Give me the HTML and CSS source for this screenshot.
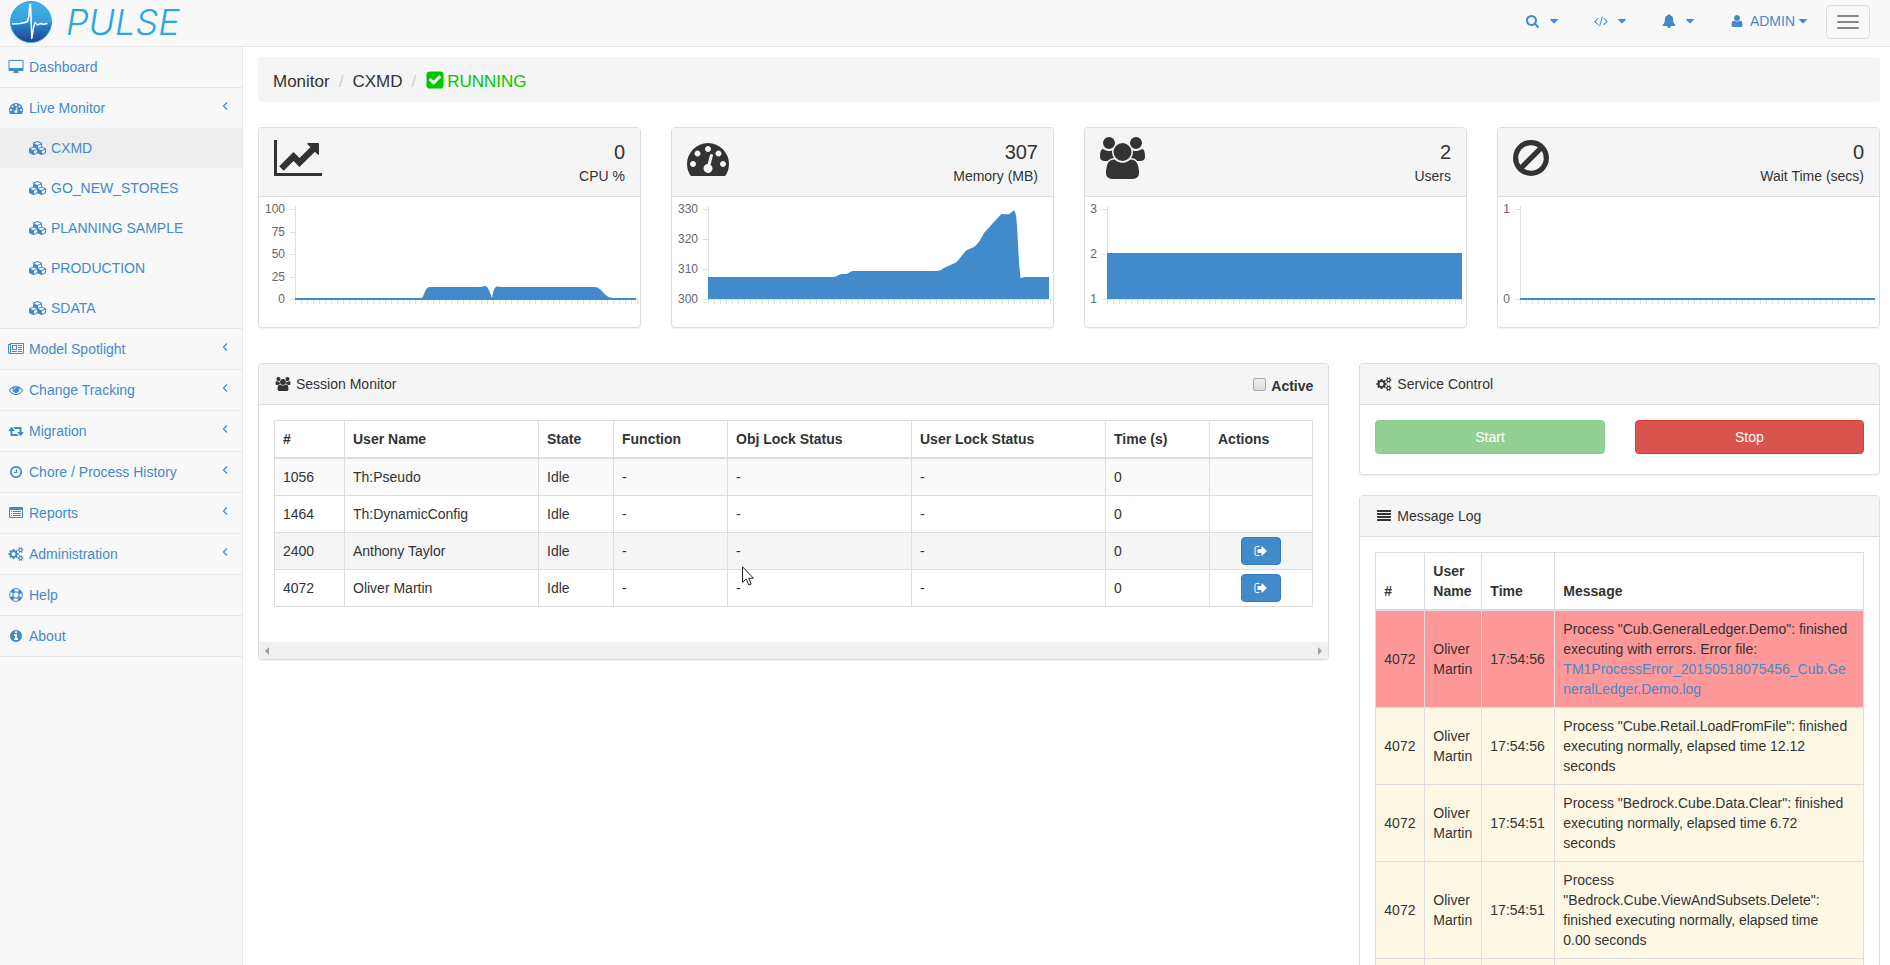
FILE: index.html
```html
<!DOCTYPE html>
<html lang="en">
<head>
    <meta charset="UTF-8">
    <meta name="viewport" content="width=device-width, initial-scale=1.0">
    <title>Pulse - CXMD</title>
    <link rel="stylesheet" href="styles.css">
</head>
<body>
    <!-- Icon sprite -->
    <svg class="sprite" aria-hidden="true">
        <symbol id="i-search" viewBox="64 0 1792 1792"><path d="M1216 832q0-185-131.5-316.5t-316.5-131.5-316.5 131.5-131.5 316.5 131.5 316.5 316.5 131.5 316.5-131.5 131.5-316.5zm512 832q0 52-38 90t-90 38q-54 0-90-38l-343-342q-179 124-399 124-143 0-273.5-55.5t-225-150-150-225-55.5-273.5 55.5-273.5 150-225 225-150 273.5-55.5 273.5 55.5 225 150 150 225 55.5 273.5q0 220-124 399l343 343q37 37 37 90z"/></symbol>
        <symbol id="i-code" viewBox="0 0 1920 1792"><path d="M617 1399l-50 50q-10 10-23 10t-23-10l-466-466q-10-10-10-23t10-23l466-466q10-10 23-10t23 10l50 50q10 10 10 23t-10 23l-393 393 393 393q10 10 10 23t-10 23zm591-1067l-373 1291q-4 13-15.5 19.5t-23.5 2.5l-62-17q-13-4-19.5-15.5t-2.5-24.5l373-1291q4-13 15.5-19.5t23.5-2.5l62 17q13 4 19.5 15.5t2.5 24.5zm657 651l-466 466q-10 10-23 10t-23-10l-50-50q-10-10-10-23t10-23l393-393-393-393q-10-10-10-23t10-23l50-50q10-10 23-10t23 10l466 466q10 10 10 23t-10 23z"/></symbol>
        <symbol id="i-bell" viewBox="0 0 1792 1792"><path d="M912 1696q0-16-16-16-59 0-101.5-42.5t-42.5-101.5q0-16-16-16t-16 16q0 73 51.5 124.5t124.5 51.5q16 0 16-16zm816-288q0 52-38 90t-90 38h-448q0 106-75 181t-181 75-181-75-75-181h-448q-52 0-90-38t-38-90q50-42 91-88t85-119.5 74.5-158.5 50-206 19.5-260q0-152 117-282.5t307-158.5q-8-19-8-39 0-40 28-68t68-28 68 28 28 68q0 20-8 39 190 28 307 158.5t117 282.5q0 139 19.5 260t50 206 74.5 158.5 85 119.5 91 88z"/></symbol>
        <symbol id="i-user" viewBox="0 0 1792 1792"><path d="M1600 1405q0 120-73 189.5t-194 69.5h-874q-121 0-194-69.5t-73-189.5q0-53 3.5-103.5t14-109 26.5-108.5 43-97.5 62-81 85.5-53.5 111.5-20q9 0 42 21.5t74.5 48 108 48 133.5 21.5 133.5-21.5 108-48 74.5-48 42-21.5q61 0 111.5 20t85.5 53.5 62 81 43 97.5 26.5 108.5 14 109 3.5 103.5zm-320-893q0 159-112.5 271.5t-271.5 112.5-271.5-112.5-112.5-271.5 112.5-271.5 271.5-112.5 271.5 112.5 112.5 271.5z"/></symbol>
        <symbol id="i-caret" viewBox="384 0 1024 1792"><path d="M1408 704q0 26-19 45l-448 448q-19 19-45 19t-45-19l-448-448q-19-19-19-45t19-45 45-19h896q26 0 45 19t19 45z"/></symbol>
        <symbol id="i-desktop" viewBox="-64 0 1920 1792"><path d="M1728 992v-832q0-13-9.5-22.5t-22.5-9.5h-1600q-13 0-22.5 9.5t-9.5 22.5v832q0 13 9.5 22.5t22.5 9.5h1600q13 0 22.5-9.5t9.5-22.5zm128-832v1088q0 66-47 113t-113 47h-544q0 37 16 77.5t32 71 16 43.5q0 26-19 45t-45 19h-512q-26 0-45-19t-19-45q0-14 16-44t32-70 16-78h-544q-66 0-113-47t-47-113v-1088q0-66 47-113t113-47h1600q66 0 113 47t47 113z"/></symbol>
        <symbol id="i-dashboard" viewBox="0 0 1792 1792"><path d="M384 1152q0-53-37.5-90.5t-90.5-37.5-90.5 37.5-37.5 90.5 37.5 90.5 90.5 37.5 90.5-37.5 37.5-90.5zm192-448q0-53-37.5-90.5t-90.5-37.5-90.5 37.5-37.5 90.5 37.5 90.5 90.5 37.5 90.5-37.5 37.5-90.5zm428 481l101-382q6-26-7.5-48.5t-38.5-29.5-48 6.5-30 39.5l-101 382q-60 5-107 43.5t-63 98.5q-20 77 20 146t117 89 146-20 89-117q16-60-6-117t-72-91zm660-33q0-53-37.5-90.5t-90.5-37.5-90.5 37.5-37.5 90.5 37.5 90.5 90.5 37.5 90.5-37.5 37.5-90.5zm-640-640q0-53-37.5-90.5t-90.5-37.5-90.5 37.5-37.5 90.5 37.5 90.5 90.5 37.5 90.5-37.5 37.5-90.5zm448 192q0-53-37.5-90.5t-90.5-37.5-90.5 37.5-37.5 90.5 37.5 90.5 90.5 37.5 90.5-37.5 37.5-90.5zm320 448q0 261-141 483-19 29-54 29h-1402q-35 0-54-29-141-221-141-483 0-182 71-348t191-286 286-191 348-71 348 71 286 191 191 286 71 348z"/></symbol>
        <symbol id="i-cubes" viewBox="0 0 2304 1792"><path d="M640 1632l384-192v-314l-384 164v342zm-64-454l404-173-404-173-404 173zm1088 454l384-192v-314l-384 164v342zm-64-454l404-173-404-173-404 173zm-448-293l384-165v-266l-384 164v267zm-64-379l441-189-441-189-441 189zm1088 518v416q0 36-19 67t-52 47l-448 224q-25 14-57 14t-57-14l-448-224q-5-2-7-4-2 2-7 4l-448 224q-25 14-57 14t-57-14l-448-224q-33-16-52-47t-19-67v-416q0-38 21.5-70t56.5-48l434-186v-400q0-38 21.5-70t56.5-48l448-192q23-10 50-10t50 10l448 192q35 16 56.5 48t21.5 70v400l434 186q36 16 57 48t21 70z"/></symbol>
        <symbol id="i-news" viewBox="0 0 2048 1792"><path d="M1024 512h-384v384h384v-384zm128 640v128h-640v-128h640zm0-768v640h-640v-640h640zm640 768v128h-512v-128h512zm0-256v128h-512v-128h512zm0-256v128h-512v-128h512zm0-256v128h-512v-128h512zm-1536 960v-960h-128v960q0 26 19 45t45 19 45-19 19-45zm1664 0v-1088h-1536v1088q0 33-11 64h1483q26 0 45-19t19-45zm128-1216v1216q0 80-56 136t-136 56h-1664q-80 0-136-56t-56-136v-1088h256v-128h1792z"/></symbol>
        <symbol id="i-eye" viewBox="0 0 1792 1792"><path d="M1664 960q-152-236-381-353 61 104 61 225 0 185-131.5 316.5t-316.5 131.5-316.5-131.5-131.5-316.5q0-121 61-225-229 117-381 353 133 205 333.5 326.5t434.5 121.5 434.5-121.5 333.5-326.5zm-720-384q0-20-14-34t-34-14q-125 0-214.5 89.5t-89.5 214.5q0 20 14 34t34 14 34-14 14-34q0-86 61-147t147-61q20 0 34-14t14-34zm848 384q0 34-20 69-140 230-376.5 368.5t-499.5 138.5-499.5-139-376.5-368q-20-35-20-69t20-69q140-229 376.5-368t499.5-139 499.5 139 376.5 368q20 35 20 69z"/></symbol>
        <symbol id="i-retweet" viewBox="64 0 1920 1792"><path d="M1344 1504q0 13-9.5 22.5t-22.5 9.5h-960q-8 0-13.5-2t-9-7-5.5-8-3-11.5-1-11.5v-600h-192q-26 0-45-19t-19-45q0-24 15-41l320-384q19-22 49-22t49 22l320 384q15 17 15 41 0 26-19 45t-45 19h-192v384h576q16 0 25 11l160 192q7 10 7 21zm640-416q0 24-15 41l-320 384q-20 23-49 23t-49-23l-320-384q-15-17-15-41 0-26 19-45t45-19h192v-384h-576q-16 0-25-12l-160-192q-7-9-7-20 0-13 9.5-22.5t22.5-9.5h960q8 0 13.5 2t9 7 5.5 8 3 11.5 1 11.5v600h192q26 0 45 19t19 45z"/></symbol>
        <symbol id="i-clock" viewBox="0 0 1792 1792"><path d="M1024 544v448q0 14-9 23t-23 9h-320q-14 0-23-9t-9-23v-64q0-14 9-23t23-9h224v-352q0-14 9-23t23-9h64q14 0 23 9t9 23zm416 352q0-148-73-273t-198-198-273-73-273 73-198 198-73 273 73 273 198 198 273 73 273-73 198-198 73-273zm224 0q0 209-103 385.5t-279.5 279.5-385.5 103-385.5-103-279.5-279.5-103-385.5 103-385.5 279.5-279.5 385.5-103 385.5 103 279.5 279.5 103 385.5z"/></symbol>
        <symbol id="i-list" viewBox="0 0 1792 1792"><path d="M256 640h128v128h-128zM256 896h128v128h-128zM256 1152h128v128h-128zM512 640h1024v128h-1024zM512 896h1024v128h-1024zM512 1152h1024v128h-1024z"/><path d="M1664 1376v-832q0-13-9.5-22.5t-22.5-9.5h-1472q-13 0-22.5 9.5t-9.5 22.5v832q0 13 9.5 22.5t22.5 9.5h1472q13 0 22.5-9.5t9.5-22.5zm128-1088v1088q0 66-47 113t-113 47h-1472q-66 0-113-47t-47-113v-1088q0-66 47-113t113-47h1472q66 0 113 47t47 113z"/></symbol>
        <symbol id="i-cogs" viewBox="0 0 1920 1792"><path d="M896 896q0-106-75-181t-181-75-181 75-75 181 75 181 181 75 181-75 75-181zm768 512q0-52-38-90t-90-38-90 38-38 90q0 53 37.5 90.5t90.5 37.5 90.5-37.5 37.5-90.5zm0-1024q0-52-38-90t-90-38-90 38-38 90q0 53 37.5 90.5t90.5 37.5 90.5-37.5 37.5-90.5zm-384 421v185q0 10-7 19.5t-16 10.5l-155 24q-11 35-32 76 34 48 90 115 7 11 7 20 0 12-7 19-23 30-82.5 89.5t-78.5 59.5q-11 0-21-7l-115-90q-37 19-77 31-11 108-23 155-7 24-30 24h-186q-11 0-20-7.5t-10-17.5l-23-153q-34-10-75-31l-118 89q-7 7-20 7-11 0-21-8-144-133-144-160 0-9 7-19 10-14 41-53t47-61q-23-44-35-82l-152-24q-10-1-17-9.5t-7-19.5v-185q0-10 7-19.5t16-10.5l155-24q11-35 32-76-34-48-90-115-7-11-7-20 0-12 7-20 22-30 82-89t79-59q11 0 21 7l115 90q34-18 77-32 11-108 23-154 7-24 30-24h186q11 0 20 7.5t10 17.5l23 153q34 10 75 31l118-89q8-7 20-7 11 0 21 8 144 133 144 160 0 8-7 19-12 16-42 54t-45 60q23 48 34 82l152 23q10 2 17 10.5t7 19.5zm640 533v140q0 16-149 31-12 27-30 52 51 113 51 138 0 4-4 7-122 71-124 71-8 0-46-47t-52-68q-20 2-30 2t-30-2q-14 21-52 68t-46 47q-2 0-124-71-4-3-4-7 0-25 51-138-18-25-30-52-149-15-149-31v-140q0-16 149-31 13-29 30-52-51-113-51-138 0-4 4-7 4-2 35-20t59-34 30-16q8 0 46 46.5t52 67.5q20-2 30-2t30 2q51-71 92-112l6-2q4 0 124 70 4 3 4 7 0 25-51 138 17 23 30 52 149 15 149 31zm0-1024v140q0 16-149 31-12 27-30 52 51 113 51 138 0 4-4 7-122 71-124 71-8 0-46-47t-52-68q-20 2-30 2t-30-2q-14 21-52 68t-46 47q-2 0-124-71-4-3-4-7 0-25 51-138-18-25-30-52-149-15-149-31v-140q0-16 149-31 13-29 30-52-51-113-51-138 0-4 4-7 4-2 35-20t59-34 30-16q8 0 46 46.5t52 67.5q20-2 30-2t30 2q51-71 92-112l6-2q4 0 124 70 4 3 4 7 0 25-51 138 17 23 30 52 149 15 149 31z"/></symbol>
        <symbol id="i-ring" viewBox="0 0 14 14"><g fill="none" stroke="currentColor"><circle cx="7" cy="7" r="6.4"/><circle cx="7" cy="7" r="3.2"/><circle cx="7" cy="7" r="4.8" stroke-width="3.4" stroke-dasharray="3.4 4.14" stroke-dashoffset="-2.07"/></g></symbol>
        <symbol id="i-info" viewBox="0 0 1792 1792"><path d="M1152 1376v-160q0-14-9-23t-23-9h-96v-512q0-14-9-23t-23-9h-320q-14 0-23 9t-9 23v160q0 14 9 23t23 9h96v320h-96q-14 0-23 9t-9 23v160q0 14 9 23t23 9h448q14 0 23-9t9-23zm-128-896v-160q0-14-9-23t-23-9h-192q-14 0-23 9t-9 23v160q0 14 9 23t23 9h192q14 0 23-9t9-23zm640 416q0 209-103 385.5t-279.5 279.5-385.5 103-385.5-103-279.5-279.5-103-385.5 103-385.5 279.5-279.5 385.5-103 385.5 103 279.5 279.5 103 385.5z"/></symbol>
        <symbol id="i-angle" viewBox="0 0 6 8"><path d="M5 .5L1.5 4L5 7.5" fill="none" stroke="currentColor" stroke-width="1.2"/></symbol>
        <symbol id="i-check" viewBox="0 0 1792 1792"><path d="M813 1299l614-614q19-19 19-45t-19-45l-102-102q-19-19-45-19t-45 19l-467 467-211-211q-19-19-45-19t-45 19l-102 102q-19 19-19 45t19 45l358 358q19 19 45 19t45-19zm851-883v960q0 119-84.5 203.5t-203.5 84.5h-960q-119 0-203.5-84.5t-84.5-203.5v-960q0-119 84.5-203.5t203.5-84.5h960q119 0 203.5 84.5t84.5 203.5z"/></symbol>
        <symbol id="i-chart" viewBox="0 0 2048 1792"><path d="M2048 1536v128h-2048v-1536h128v1408h1920zm-128-1248v435q0 21-19.5 29.5t-35.5-7.5l-121-121-633 633q-10 10-23 10t-23-10l-233-233-416 416-192-192 585-585q10-10 23-10t23 10l233 233 464-464-121-121q-16-16-7.5-35.5t29.5-19.5h435q14 0 23 9t9 23z"/></symbol>
        <symbol id="i-users" viewBox="64 0 1920 1792"><path d="M657 896q-162 5-265 128h-134q-82 0-138-40.5t-56-118.5q0-353 124-353 6 0 43.5 21t97.5 42.5 119 21.5q67 0 133-23-5 37-5 66 0 159 81 257zm1071 637q0 120-73 189.5t-194 69.5h-874q-121 0-194-69.5t-73-189.5q0-53 3.5-103.5t14-109 26.5-108.5 43-97.5 62-81 85.5-53.5 111.5-20q10 0 43 21.5t73 48 107 48 135 21.5 135-21.5 107-48 73-48 43-21.5q61 0 111.5 20t85.5 53.5 62 81 43 97.5 26.5 108.5 14 109 3.5 103.5zm-1024-1277q0 106-75 181t-181 75-181-75-75-181 75-181 181-75 181 75 75 181zm704 384q0 159-112.5 271.5t-271.5 112.5-271.5-112.5-112.5-271.5 112.5-271.5 271.5-112.5 271.5 112.5 112.5 271.5zm576 225q0 78-56 118.5t-138 40.5h-134q-103-123-265-128 81-117 81-257 0-29-5-66 66 23 133 23 59 0 119-21.5t97.5-42.5 43.5-21q124 0 124 353zm-128-609q0 106-75 181t-181 75-181-75-75-181 75-181 181-75 181 75 75 181z"/></symbol>
        <symbol id="i-ban" viewBox="128 0 1792 1792"><path d="M1440 893q0-161-87-295l-754 753q137 89 297 89 111 0 211.5-43.5t173.5-116.5 116-174.5 43-212.5zm-999 299l755-754q-135-91-300-91-148 0-273 73t-198 199-73 274q0 162 89 299zm1223-299q0 157-61 300t-163.5 246-245 164-298.5 61-298.5-61-245-164-163.5-246-61-300 61-299.5 163.5-245.5 245-164 298.5-61 298.5 61 245 164 163.5 245.5 61 299.5z"/></symbol>
        <symbol id="i-bars" viewBox="0 0 1792 1792"><rect y="128" width="1792" height="256" rx="64"/><rect y="512" width="1792" height="256" rx="64"/><rect y="896" width="1792" height="256" rx="64"/><rect y="1280" width="1792" height="256" rx="64"/></symbol>
        <symbol id="i-signout" viewBox="0 0 1792 1792"><path d="M704 1440q0 4 1 20t.5 26.5-3 23.5-10 19.5-20.5 6.5h-320q-119 0-203.5-84.5t-84.5-203.5v-704q0-119 84.5-203.5t203.5-84.5h320q13 0 22.5 9.5t9.5 22.5q0 4 1 20t.5 26.5-3 23.5-10 19.5-20.5 6.5h-320q-66 0-113 47t-47 113v704q0 66 47 113t113 47h312l11.5 1 11.5 3 8 5.5 7 9 2 13.5zm928-544q0 26-19 45l-544 544q-19 19-45 19t-45-19-19-45v-288h-448q-26 0-45-19t-19-45v-384q0-26 19-45t45-19h448v-288q0-26 19-45t45-19 45 19l544 544q19 19 19 45z"/></symbol>
    </svg>

    <!-- Top navbar -->
    <header class="navbar">
        <a class="brand" href="#">
            <svg class="brand-logo" viewBox="0 0 42 42" aria-hidden="true">
                <defs>
                    <linearGradient id="logoFill" x1="0" y1="0" x2="0" y2="1">
                        <stop offset="0" stop-color="#3fb4e6"/>
                        <stop offset="0.5" stop-color="#3a9fdc"/>
                        <stop offset="0.55" stop-color="#2384c8"/>
                        <stop offset="1" stop-color="#243f94"/>
                    </linearGradient>
                </defs>
                <circle cx="21" cy="21" r="20.5" fill="url(#logoFill)" stroke="#2fa3da"/>
                <path d="M2 23l8-.5 5-1 2.500-1 1.300-5 1-12 .8 0 1.200 34 2-12 1.200-4 2.500 2.500 3-1.500 3 .8 4-.8" fill="none" stroke="#fff" stroke-width="1.5" stroke-linejoin="round"/>
            </svg>
            <span class="brand-name">PULSE</span>
        </a>
        <nav class="nav-links">
            <a class="nav-link" href="#" aria-label="Search"><svg class="icon"><use href="#i-search"/></svg><svg class="caret caret-far"><use href="#i-caret"/></svg></a>
            <a class="nav-link" href="#" aria-label="Code"><svg class="icon"><use href="#i-code"/></svg><svg class="caret caret-far"><use href="#i-caret"/></svg></a>
            <a class="nav-link" href="#" aria-label="Alerts"><svg class="icon"><use href="#i-bell"/></svg><svg class="caret caret-far"><use href="#i-caret"/></svg></a>
            <a class="nav-link" href="#"><svg class="icon"><use href="#i-user"/></svg><span class="nav-user">ADMIN</span><svg class="caret"><use href="#i-caret"/></svg></a>
        </nav>
        <button class="toggle" type="button" aria-label="Toggle menu">
            <span class="toggle-bar"></span>
            <span class="toggle-bar"></span>
            <span class="toggle-bar"></span>
        </button>
    </header>

    <div class="layout">
        <!-- Sidebar -->
        <nav class="sidebar">
            <ul class="menu">
                <li class="menu-item"><a class="menu-link" href="#"><svg class="menu-icon"><use href="#i-desktop"/></svg>Dashboard</a></li>
                <li class="menu-item">
                    <a class="menu-link" href="#"><svg class="menu-icon"><use href="#i-dashboard"/></svg>Live Monitor<svg class="angle"><use href="#i-angle"/></svg></a>
                    <ul class="submenu">
                        <li><a class="menu-link submenu-link active" href="#"><svg class="menu-icon"><use href="#i-cubes"/></svg>CXMD</a></li>
                        <li><a class="menu-link submenu-link" href="#"><svg class="menu-icon"><use href="#i-cubes"/></svg>GO_NEW_STORES</a></li>
                        <li><a class="menu-link submenu-link" href="#"><svg class="menu-icon"><use href="#i-cubes"/></svg>PLANNING SAMPLE</a></li>
                        <li><a class="menu-link submenu-link" href="#"><svg class="menu-icon"><use href="#i-cubes"/></svg>PRODUCTION</a></li>
                        <li><a class="menu-link submenu-link" href="#"><svg class="menu-icon"><use href="#i-cubes"/></svg>SDATA</a></li>
                    </ul>
                </li>
                <li class="menu-item"><a class="menu-link" href="#"><svg class="menu-icon"><use href="#i-news"/></svg>Model Spotlight<svg class="angle"><use href="#i-angle"/></svg></a></li>
                <li class="menu-item"><a class="menu-link" href="#"><svg class="menu-icon"><use href="#i-eye"/></svg>Change Tracking<svg class="angle"><use href="#i-angle"/></svg></a></li>
                <li class="menu-item"><a class="menu-link" href="#"><svg class="menu-icon"><use href="#i-retweet"/></svg>Migration<svg class="angle"><use href="#i-angle"/></svg></a></li>
                <li class="menu-item"><a class="menu-link" href="#"><svg class="menu-icon"><use href="#i-clock"/></svg>Chore / Process History<svg class="angle"><use href="#i-angle"/></svg></a></li>
                <li class="menu-item"><a class="menu-link" href="#"><svg class="menu-icon"><use href="#i-list"/></svg>Reports<svg class="angle"><use href="#i-angle"/></svg></a></li>
                <li class="menu-item"><a class="menu-link" href="#"><svg class="menu-icon"><use href="#i-cogs"/></svg>Administration<svg class="angle"><use href="#i-angle"/></svg></a></li>
                <li class="menu-item"><a class="menu-link" href="#"><svg class="menu-icon"><use href="#i-ring"/></svg>Help</a></li>
                <li class="menu-item"><a class="menu-link" href="#"><svg class="menu-icon"><use href="#i-info"/></svg>About</a></li>
            </ul>
        </nav>

        <main class="content">
            <div class="breadcrumb">
                <span>Monitor</span>
                <span class="divider">/</span>
                <span>CXMD</span>
                <span class="divider">/</span>
                <span class="status"><svg class="status-icon"><use href="#i-check"/></svg>RUNNING</span>
            </div>

            <!-- Metric cards -->
            <section class="cards">
                <div class="panel">
                    <div class="card-head">
                        <svg class="card-icon card-icon-wide"><use href="#i-chart"/></svg>
                        <div class="card-info">
                            <div class="card-value">0</div>
                            <div class="card-label">CPU %</div>
                        </div>
                    </div>
                    <svg class="chart" viewBox="0 0 381 130">
                        <path class="axis" d="M36.5 9v94M31 12.5h6M31 35.5h6M31 57.5h6M31 80.5h6M31 102.5h349"/>
                        <path class="ticks" d="M36 105h343"/>
                        <path class="area" d="M36 101h127C166 97 166 90 171 90H221C224 90 226 88 228 90C230 92 232 98 233 101C234 96 235 90 238 89.5L244 90H336C343 90 345 101 354 101H377V103H36Z"/>
                        <g class="tick-label"><text x="26" y="16">100</text><text x="26" y="39">75</text><text x="26" y="61">50</text><text x="26" y="84">25</text><text x="26" y="106">0</text></g>
                    </svg>
                </div>
                <div class="panel">
                    <div class="card-head">
                        <svg class="card-icon"><use href="#i-dashboard"/></svg>
                        <div class="card-info">
                            <div class="card-value">307</div>
                            <div class="card-label">Memory (MB)</div>
                        </div>
                    </div>
                    <svg class="chart" viewBox="0 0 381 130">
                        <path class="axis" d="M36.5 9v94M31 12.5h6M31 42.5h6M31 72.5h6M31 102.5h349"/>
                        <path class="ticks" d="M36 105h343"/>
                        <path class="area" d="M36 80H161C165 80 167 77 170 77H174C177 77 178 74 181 74H265C269 74 271 71 274 70L284 65.5C288 62 291 56 295 53L302 50C306 47 309 42 312 36L321 26L329 17.5C331 16 335 18 337 17L342 13.5C344 14 345 25 345.500 38L347 65L348.500 81L353 80H377V102H36Z"/>
                        <g class="tick-label"><text x="26" y="16">330</text><text x="26" y="46">320</text><text x="26" y="76">310</text><text x="26" y="106">300</text></g>
                    </svg>
                </div>
                <div class="panel">
                    <div class="card-head">
                        <svg class="card-icon card-icon-users"><use href="#i-users"/></svg>
                        <div class="card-info">
                            <div class="card-value">2</div>
                            <div class="card-label">Users</div>
                        </div>
                    </div>
                    <svg class="chart" viewBox="0 0 381 130">
                        <path class="axis" d="M22.5 9v94M17 12.5h6M17 57.5h6M17 102.5h363"/>
                        <path class="ticks" d="M22 105h356"/>
                        <path class="area" d="M22 56H377V102H22Z"/>
                        <g class="tick-label"><text x="12" y="16">3</text><text x="12" y="61">2</text><text x="12" y="106">1</text></g>
                    </svg>
                </div>
                <div class="panel">
                    <div class="card-head">
                        <svg class="card-icon"><use href="#i-ban"/></svg>
                        <div class="card-info">
                            <div class="card-value">0</div>
                            <div class="card-label">Wait Time (secs)</div>
                        </div>
                    </div>
                    <svg class="chart" viewBox="0 0 381 130">
                        <path class="axis" d="M22.5 9v94M17 12.5h6M17 102.5h363"/>
                        <path class="ticks" d="M22 105h356"/>
                        <path class="area" d="M22 101H377V103H22Z"/>
                        <g class="tick-label"><text x="12" y="16">1</text><text x="12" y="106">0</text></g>
                    </svg>
                </div>
            </section>

            <section class="columns">
                <!-- Session Monitor -->
                <div class="panel session">
                    <div class="panel-head">
                        <svg class="head-icon"><use href="#i-users"/></svg>
                        <span>Session Monitor</span>
                        <label class="active-filter" for="active"><input class="tick-box" type="checkbox" id="active">Active</label>
                    </div>
                    <div class="session-body">
                        <table class="table striped">
                            <colgroup>
                                <col class="col-id"><col class="col-user"><col class="col-state"><col class="col-function">
                                <col class="col-obj"><col class="col-user"><col class="col-time"><col>
                            </colgroup>
                            <thead>
                                <tr><th>#</th><th>User Name</th><th>State</th><th>Function</th><th>Obj Lock Status</th><th>User Lock Status</th><th>Time (s)</th><th>Actions</th></tr>
                            </thead>
                            <tbody>
                                <tr><td>1056</td><td>Th:Pseudo</td><td>Idle</td><td>-</td><td>-</td><td>-</td><td>0</td><td></td></tr>
                                <tr><td>1464</td><td>Th:DynamicConfig</td><td>Idle</td><td>-</td><td>-</td><td>-</td><td>0</td><td></td></tr>
                                <tr class="hovered"><td>2400</td><td>Anthony Taylor</td><td>Idle</td><td>-</td><td>-</td><td>-</td><td>0</td><td class="action-cell"><button class="btn-logout" type="button" aria-label="Log out"><svg class="icon"><use href="#i-signout"/></svg></button></td></tr>
                                <tr><td>4072</td><td>Oliver Martin</td><td>Idle</td><td>-</td><td>-</td><td>-</td><td>0</td><td class="action-cell"><button class="btn-logout" type="button" aria-label="Log out"><svg class="icon"><use href="#i-signout"/></svg></button></td></tr>
                            </tbody>
                        </table>
                    </div>
                    <div class="scroll-track">
                        <span class="arrow arrow-left"></span>
                        <span class="arrow arrow-right"></span>
                    </div>
                </div>

                <div class="side">
                    <!-- Service Control -->
                    <div class="panel">
                        <div class="panel-head"><svg class="head-icon"><use href="#i-cogs"/></svg><span>Service Control</span></div>
                        <div class="service-body">
                            <button class="btn btn-start" type="button" disabled>Start</button>
                            <button class="btn btn-stop" type="button">Stop</button>
                        </div>
                    </div>

                    <!-- Message Log -->
                    <div class="panel">
                        <div class="panel-head"><svg class="head-icon"><use href="#i-bars"/></svg><span>Message Log</span></div>
                        <div class="log-body">
                            <table class="table log">
                                <colgroup><col class="log-id"><col class="log-user"><col class="log-time"><col></colgroup>
                                <thead>
                                    <tr><th>#</th><th>User Name</th><th>Time</th><th>Message</th></tr>
                                </thead>
                                <tbody>
                                    <tr class="error"><td>4072</td><td>Oliver Martin</td><td>17:54:56</td><td>Process "Cub.GeneralLedger.Demo": finished executing with errors. Error file: <a class="log-link" href="#">TM1ProcessError_20150518075456_Cub.GeneralLedger.Demo.log</a></td></tr>
                                    <tr class="notice"><td>4072</td><td>Oliver Martin</td><td>17:54:56</td><td>Process "Cube.Retail.LoadFromFile": finished executing normally, elapsed time 12.12 seconds</td></tr>
                                    <tr class="notice"><td>4072</td><td>Oliver Martin</td><td>17:54:51</td><td>Process "Bedrock.Cube.Data.Clear": finished executing normally, elapsed time 6.72 seconds</td></tr>
                                    <tr class="notice"><td>4072</td><td>Oliver Martin</td><td>17:54:51</td><td>Process "Bedrock.Cube.ViewAndSubsets.Delete": finished executing normally, elapsed time 0.00&nbsp;seconds</td></tr>
                                    <tr class="notice"><td></td><td></td><td></td><td></td></tr>
                                </tbody>
                            </table>
                        </div>
                    </div>
                </div>
            </section>
        </main>
    </div>

    <!-- Mouse pointer -->
    <svg class="pointer" viewBox="0 0 12 20" aria-hidden="true"><path d="M.5 .8V16.5L4.200 13L6.800 19L9.200 18L6.700 12.200H11.500Z" fill="#fff" stroke="#222"/></svg>
</body>
</html>
```

FILE: styles.css
```css
/* --- GENERAL --- */
* {
    box-sizing: border-box;
}

body {
    margin: 0;
    height: 100vh;
    display: flex;
    flex-direction: column;
    overflow: hidden;
    position: relative;
    font-family: "Liberation Sans", Arial, sans-serif;
    font-size: 14px;
    line-height: 20px;
    color: #333;
    background: #fff;
}

a {
    color: #428bca;
    text-decoration: none;
}

svg {
    fill: currentColor;
    flex: none;
}

ul {
    list-style: none;
    margin: 0;
    padding: 0;
}

button {
    font: inherit;
    cursor: pointer;
}

.sprite {
    display: none;
}

.icon {
    width: 14px;
    height: 14px;
}

/* --- NAVBAR --- */
.navbar {
    flex: none;
    display: flex;
    align-items: center;
    height: 47px;
    padding: 0 20px 2px 10px;
    background: #f8f8f8;
    border-bottom: 1px solid #e7e7e7;
}

.brand {
    display: flex;
    align-items: center;
    gap: 14px;
    color: #29a8e0;
}

.brand-logo {
    width: 42px;
    height: 42px;
}

.brand-name {
    font-family: Inter, Roboto, sans-serif;
    font-size: 36px;
    font-style: italic;
    font-weight: 300;
    line-height: 42px;
}

.nav-links {
    display: flex;
    gap: 36px;
    margin-left: auto;
    margin-right: 19px;
    padding-bottom: 2px;
}

.nav-link {
    display: flex;
    align-items: center;
}

.nav-user {
    margin: 0 4px 0 6px;
}

.caret {
    width: 8px;
    height: 14px;
}

.caret-far {
    margin-left: 10px;
}

.toggle {
    display: flex;
    flex-direction: column;
    align-items: center;
    justify-content: center;
    gap: 4px;
    width: 44px;
    height: 34px;
    padding: 0;
    background: transparent;
    border: 1px solid #ddd;
    border-radius: 4px;
}

.toggle-bar {
    width: 22px;
    height: 2px;
    border-radius: 1px;
    background: #888;
}

/* --- LAYOUT --- */
.layout {
    flex: 1;
    display: flex;
    min-height: 0;
}

.content {
    flex: 1;
    min-width: 0;
    padding: 10px 10px 0 15px;
}

/* --- SIDEBAR --- */
.sidebar {
    flex: none;
    width: 243px;
    background: #f8f8f8;
    border-right: 1px solid #e7e7e7;
}

.menu-item {
    border-bottom: 1px solid #e7e7e7;
}

.menu-link {
    display: flex;
    align-items: center;
    gap: 4px;
    padding: 10px 14px 10px 7px;
}

.menu-icon {
    width: 18px;
    height: 14px;
}

.angle {
    width: 6px;
    height: 8px;
    margin: 0 0 4px auto;
}

.submenu-link {
    padding-left: 29px;
}

.submenu-link.active {
    background: #eee;
}

/* --- BREADCRUMB --- */
.breadcrumb {
    display: flex;
    gap: 9px;
    padding: 13px 15px 8px;
    margin-bottom: 25px;
    font-size: 17px;
    line-height: 24px;
    background: #f5f5f5;
    border-radius: 4px;
}

.divider {
    color: #ccc;
}

.status {
    display: flex;
    align-items: flex-start;
    gap: 2px;
    color: #00c800;
}

.status-icon {
    width: 20px;
    height: 20px;
}

/* --- PANELS --- */
.panel {
    background: #fff;
    border: 1px solid #ddd;
    border-radius: 4px;
    box-shadow: 0 1px 1px rgba(0, 0, 0, 0.05);
}

.panel-head {
    display: flex;
    align-items: center;
    gap: 5px;
    padding: 10px 15px 10px 16px;
    background: #f5f5f5;
    border-bottom: 1px solid #ddd;
    border-radius: 3px 3px 0 0;
}

.head-icon {
    width: 16px;
    height: 14px;
}

/* --- METRIC CARDS --- */
.cards {
    display: grid;
    grid-template-columns: repeat(4, 1fr);
    gap: 30px;
    margin-bottom: 35px;
}

.card-head {
    display: flex;
    justify-content: space-between;
    padding: 9px 15px 11px;
    background: #f5f5f5;
    border-bottom: 1px solid #ddd;
    border-radius: 3px 3px 0 0;
}

.card-icon {
    width: 42px;
    height: 42px;
}

.card-icon-wide {
    width: 48px;
}

.card-icon-users {
    width: 45px;
}

.card-info {
    text-align: right;
}

.card-value {
    font-size: 20px;
    line-height: 30px;
}

.card-label {
    line-height: 18px;
}

.chart {
    display: block;
    width: 100%;
}

.axis {
    fill: none;
    stroke: #e0e0e0;
    shape-rendering: crispEdges;
}

.ticks {
    fill: none;
    stroke: #e0e0e0;
    stroke-width: 4;
    stroke-dasharray: 1 5;
    shape-rendering: crispEdges;
}

.area {
    fill: #428bca;
}

.tick-label {
    fill: #666;
    font-size: 12px;
    text-anchor: end;
}

/* --- COLUMNS --- */
.columns {
    display: grid;
    grid-template-columns: calc((100% + 30px) * 2 / 3 - 30px) 1fr;
    gap: 30px;
    align-items: start;
}

.side {
    display: flex;
    flex-direction: column;
    gap: 20px;
}

/* --- TABLES --- */
.table {
    width: 100%;
    table-layout: fixed;
    border-collapse: collapse;
}

.table th,
.table td {
    padding: 8px;
    border: 1px solid #ddd;
    text-align: left;
    vertical-align: middle;
}

.table th {
    border-bottom-width: 2px;
    vertical-align: bottom;
}

.striped tbody tr:first-child {
    background: #f9f9f9;
}

.striped .hovered {
    background: #f5f5f5;
}

.col-id {
    width: 70px;
}

.col-user {
    width: 194px;
}

.col-state {
    width: 75px;
}

.col-function {
    width: 114px;
}

.col-obj {
    width: 184px;
}

.col-time {
    width: 104px;
}

/* --- SESSION MONITOR --- */
.active-filter {
    display: flex;
    align-items: center;
    gap: 5px;
    height: 20px;
    margin-left: auto;
    padding-top: 3px;
    font-weight: bold;
}

.tick-box {
    appearance: none;
    width: 13px;
    height: 13px;
    margin: 0 0 3px;
    border: 1px solid #aaa;
    border-radius: 2px;
    background: linear-gradient(#eee, #ddd);
}

.session-body {
    padding: 15px 15px 35px;
}

.table .action-cell {
    padding: 4px;
    text-align: center;
}

.btn-logout {
    display: inline-flex;
    align-items: center;
    justify-content: center;
    width: 40px;
    height: 28px;
    padding: 0;
    vertical-align: middle;
    color: #fff;
    background: #428bca;
    border: 1px solid #357ebd;
    border-radius: 4px;
}

.scroll-track {
    display: flex;
    align-items: center;
    justify-content: space-between;
    height: 17px;
    padding: 0 6px;
    background: #f0f0f0;
    border-radius: 0 0 3px 3px;
}

.arrow {
    border: 4px solid transparent;
}

.arrow-left {
    border-left: 0;
    border-right-color: #a0a0a0;
}

.arrow-right {
    border-right: 0;
    border-left-color: #a0a0a0;
}

/* --- SERVICE CONTROL --- */
.service-body {
    display: flex;
    gap: 30px;
    padding: 15px 15px 20px;
}

.btn {
    flex: 1;
    height: 34px;
    padding: 0;
    color: #fff;
    border: 1px solid;
    border-radius: 4px;
}

.btn-start {
    background: #5cb85c;
    border-color: #4cae4c;
    opacity: 0.65;
}

.btn-stop {
    background: #d9534f;
    border-color: #d43f3a;
}

/* --- MESSAGE LOG --- */
.log-body {
    padding: 15px;
}

.log {
    overflow-wrap: break-word;
}

.table.log td:last-child {
    padding-right: 14px;
}

.log-id {
    width: 49px;
}

.log-user {
    width: 57px;
}

.log-time {
    width: 73px;
}

.error {
    background: #ff9999;
}

.notice {
    background: #fcf8e3;
}

/* --- POINTER --- */
.pointer {
    position: absolute;
    left: 742px;
    top: 566px;
    width: 12px;
    height: 20px;
    pointer-events: none;
}
```
